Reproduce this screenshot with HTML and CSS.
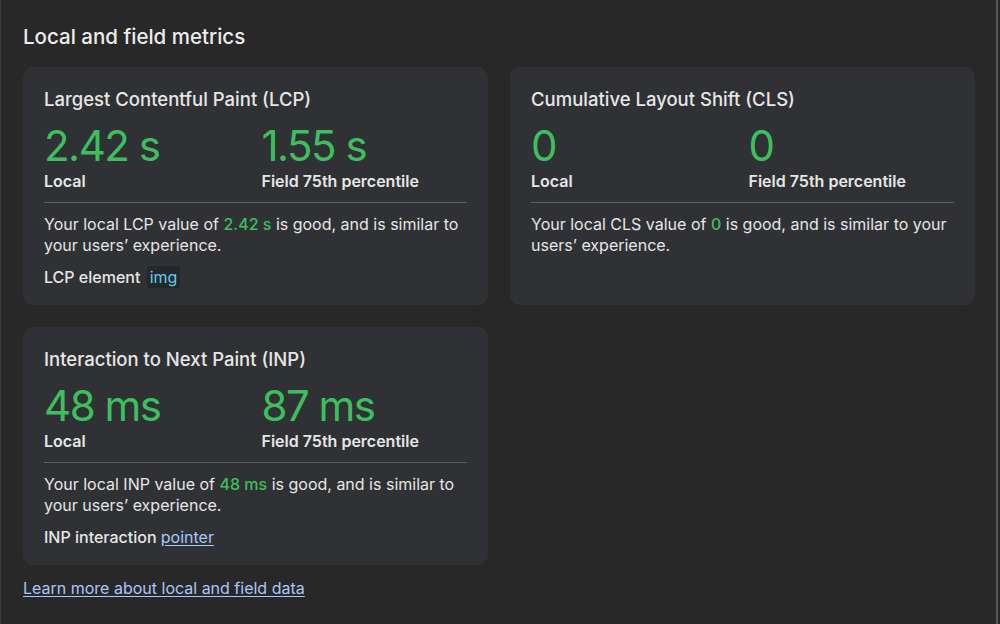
FILE: index.html
```html
<!DOCTYPE html>
<html lang="en">
<head>
<meta charset="utf-8">
<link rel="stylesheet" href="styles.css">
</head>
<body>
<div class="panel">
  <h2 class="heading">Local and field metrics</h2>
  <div class="grid">
    <section class="card">
      <h3 class="card-title">Largest Contentful Paint (LCP)</h3>
      <div class="values">
        <div class="val"><div class="num">2.42 s</div><div class="lbl">Local</div></div>
        <div class="val"><div class="num">1.55 s</div><div class="lbl">Field 75th percentile</div></div>
      </div>
      <p class="desc">Your local LCP value of <span class="good">2.42 s</span> is good, and is similar to your users’ experience.</p>
      <p class="extra">LCP element <span class="node">img</span></p>
    </section>
    <section class="card">
      <h3 class="card-title">Cumulative Layout Shift (CLS)</h3>
      <div class="values">
        <div class="val"><div class="num">0</div><div class="lbl">Local</div></div>
        <div class="val"><div class="num">0</div><div class="lbl">Field 75th percentile</div></div>
      </div>
      <p class="desc">Your local CLS value of <span class="good">0</span> is good, and is similar to your users’ experience.</p>
    </section>
    <section class="card">
      <h3 class="card-title">Interaction to Next Paint (INP)</h3>
      <div class="values">
        <div class="val"><div class="num">48 ms</div><div class="lbl">Local</div></div>
        <div class="val"><div class="num">87 ms</div><div class="lbl">Field 75th percentile</div></div>
      </div>
      <p class="desc">Your local INP value of <span class="good">48 ms</span> is good, and is similar to your users’ experience.</p>
      <p class="extra">INP interaction <a class="link" href="#">pointer</a></p>
    </section>
  </div>
  <a class="link learn" href="#">Learn more about local and field data</a>
</div>
</body>
</html>
```

FILE: styles.css
```css
html, body {
  margin: 0;
  padding: 0;
  background: #282828;
}
body {
  font-family: Inter, "Noto Sans", sans-serif;
  color: #e6e6e6;
  width: 1000px;
  height: 624px;
  overflow: hidden;
}
.panel {
  box-sizing: border-box;
  width: 998px;
  height: 624px;
  border-left: 1px solid #3a3a3a;
  border-right: 2px solid #565656;
  padding: 24px 22px 0 22px;
}
.heading {
  margin: 0;
  font-size: 20.5px;
  font-weight: 500;
  line-height: 26px;
  color: #ececec;
}
.grid {
  margin-top: 17px;
  display: grid;
  grid-template-columns: 465px 465px;
  column-gap: 22px;
  row-gap: 22px;
}
.card {
  background: #303134;
  border-radius: 10px;
  padding: 21px 21px 14px 21px;
  min-height: 238px;
  box-sizing: border-box;
}
.card-title {
  margin: 0;
  font-size: 18.5px;
  font-weight: 500;
  line-height: 22px;
  color: #e6e6e6;
}
.values {
  display: grid;
  grid-template-columns: 1fr 1fr;
  column-gap: 12px;
  padding-bottom: 11px;
  border-bottom: 1px solid #5d5e62;
}
.num {
  font-size: 42px;
  line-height: 50px;
  color: #3dbf5f;
  letter-spacing: -1.5px;
  margin-top: 11px;
}
.lbl {
  font-size: 16px;
  font-weight: 600;
  line-height: 20px;
  color: #e6e6e6;
}
.desc {
  margin: 11px 0 0 0;
  font-size: 16px;
  line-height: 21px;
  color: #e6e6e6;
}
.good {
  color: #3dbf5f;
  font-weight: 500;
}
.extra {
  margin: 10px 0 0 0;
  font-size: 16px;
  line-height: 22px;
  font-weight: 500;
}
.node {
  display: inline-block;
  font-weight: 400;
  color: #5ccfee;
  background: #26272a;
  border-radius: 3px;
  padding: 0 3px;
  margin-left: 2px;
}
.link {
  color: #a8c7fa;
  font-weight: 400;
  text-decoration: underline;
  text-underline-offset: 2px;
}
.learn {
  display: inline-block;
  margin-top: 13px;
  font-size: 16px;
  line-height: 20px;
}
```
